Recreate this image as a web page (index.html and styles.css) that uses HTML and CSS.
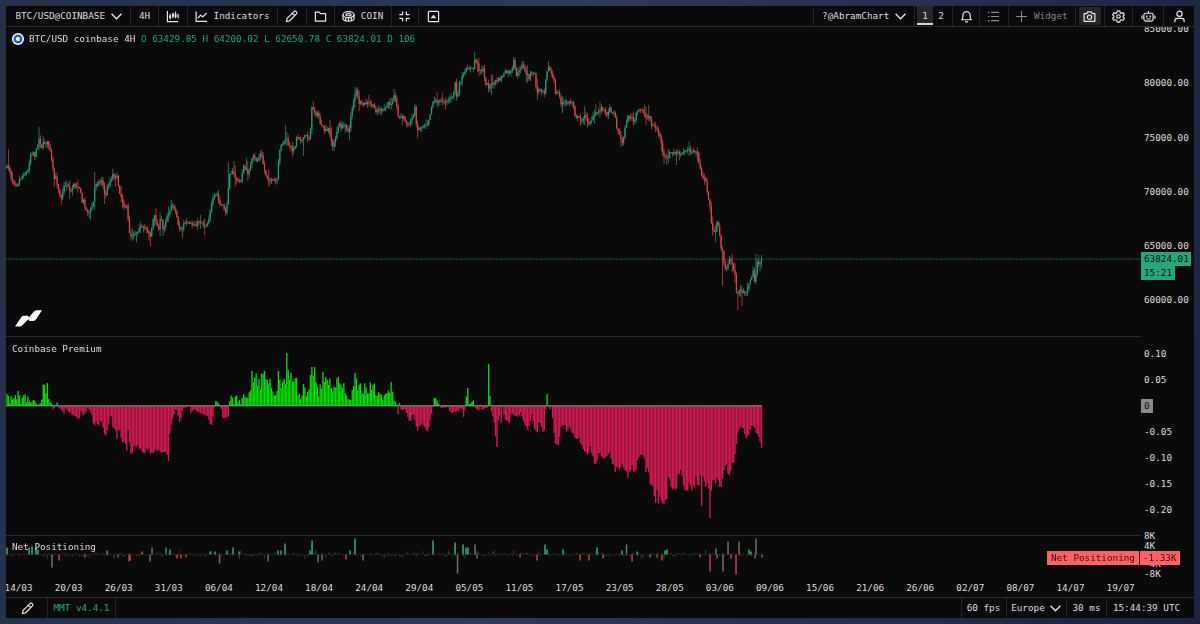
FILE: index.html
```
<!DOCTYPE html>
<html lang="en">
<head>
  <meta charset="UTF-8" />
  <title>BTC/USD coinbase 4H</title>
  <link rel="stylesheet" href="styles.css">
</head>
<body>

<div class="app">
  <header class="toolbar">
    <div class="cell pair">BTC/USD@COINBASE <svg class="chev" viewBox="0 0 10 6"><path d="M.5.5 5 5 9.5.5"/></svg></div>
    <div class="cell tf">4H</div>
    <div class="cell icon28"><svg class="ico" viewBox="0 0 14 14"><path d="M1.500 1v11.500H13"/><path d="M4.500 4v6M7.500 3v6M10.300 2v7M13 4v5"/><path stroke-width="2" d="M4.500 6v3M7.500 4v3M10.300 4.500v3"/></svg></div>
    <div class="cell indicators"><svg class="ico" viewBox="0 0 14 14"><path d="M1.200 1.500v10.800H13M3 9l3-3.500 2.500 2L12.500 3"/></svg> Indicators</div>
    <div class="cell icon28"><svg class="ico" viewBox="0 0 14 14"><path d="M1.500 12.500l.8-3.500L9.500 1.800a1.700 1.700 0 0 1 2.600 2.600L5 11.600zM8 3.500 10.500 6"/></svg></div>
    <div class="cell icon28"><svg class="ico" viewBox="0 0 14 14"><path d="M1.500 2.300h4l1.500 1.700h5.500v8h-11z"/></svg></div>
    <div class="cell coin"><svg class="ico" viewBox="0 0 14 14"><ellipse cx="7" cy="5" rx="6" ry="3.200"/><ellipse cx="7" cy="5" rx="2.800" ry="1.200"/><path d="M1 5v3.500c0 4.600 12 4.600 12 0V5M4 8v3M7 8.500v3.500M10 8v3"/></svg> COIN</div>
    <div class="cell shrink"><svg class="ico" viewBox="0 0 14 14"><path d="M5 1.500V5H1.500M9 1.500V5h3.500M5 12.500V9H1.500M9 12.500V9h3.500"/></svg></div>
    <div class="cell last"><svg class="ico" viewBox="0 0 14 14"><rect x="1.500" y="1.500" width="11" height="11" rx="1"/><path class="solid" d="M3.800 8.800 7 5l3.200 3.800z"/></svg></div>
    <div class="grow"></div>
    <div class="cell layout">?@AbramChart <svg class="chev" viewBox="0 0 10 6"><path d="M.5.5 5 5 9.5.5"/></svg></div>
    <div class="cell tabs"><span class="tab active">1</span><span class="tab">2</span></div>
    <div class="cell bell"><svg class="ico" viewBox="0 0 14 14"><path d="M1.800 10.500c1.400-1.200 1.400-2.500 1.400-5a3.800 3.800 0 0 1 7.600 0c0 2.500 0 3.800 1.400 5zM5.500 12.700h3"/></svg></div>
    <div class="cell list"><svg class="ico dim" viewBox="0 0 14 14"><path d="M4.500 2.500H13M4.500 7H13M4.500 11.500H13M1 2.500h1.600M1 7h1.600M1 11.500h1.600"/></svg></div>
    <div class="cell widget"><svg class="ico dim" viewBox="0 0 14 14"><path d="M7 1.200v11.600M1.200 7h11.600"/></svg> Widget</div>
    <div class="cell camera"><span class="shot"><svg class="ico" viewBox="0 0 14 14"><path d="M1.200 4h2.600l1.400-2h3.600l1.400 2h2.600v8.200H1.200z"/><circle cx="7" cy="7.700" r="2.300"/></svg></span></div>
    <div class="cell icon28"><svg class="ico" viewBox="0 0 14 14"><path d="M5.700 1h2.600l.5 1.800 1.500.8 1.800-.5 1.200 2.200L12 6.500v1l1.300 1.300-1.200 2.200-1.900-.5-1.400.8-.5 1.700H5.700l-.5-1.700-1.400-.8-1.900.5L.7 8.800 2 7.500v-1L.7 5.300l1.200-2.200 1.800.5 1.500-.8z"/><circle cx="7" cy="7" r="1.900"/></svg></div>
    <div class="cell robot"><svg class="ico wide" viewBox="0 0 16 14"><path d="M8 1v2.500M5 3.500h6q2 0 2 2V10q0 2-2 2H5q-2 0-2-2V5.500q0-2 2-2zM1 6v3.500M15 6v3.500M5.800 9.700h4.400"/><path stroke-width="1.800" d="M5.300 6.800h1.600M9.100 6.800h1.600"/></svg></div>
    <div class="cell last user"><svg class="ico" viewBox="0 0 14 14"><circle cx="7" cy="4" r="2.800"/><path d="M2 13.300V11.500q0-2.500 2.500-2.500h5q2.500 0 2.500 2.500v1.800"/></svg></div>
  </header>

  <section class="pane price">
    <canvas id="price" width="1135" height="310"></canvas>
    <div class="legend">
      <svg class="coinbase" viewBox="0 0 12 12"><circle cx="6" cy="6" r="6" fill="#fff"/><circle cx="6" cy="6" r="3.300" fill="none" stroke="#2459e0" stroke-width="2.400"/><path d="M6 5.100h3v1.800H6z" fill="#2459e0"/><circle cx="6" cy="6" r="1.700" fill="#fff"/></svg>
      <span>BTC/USD coinbase 4H <em>O 63429.85 H 64200.02 L 62650.78 C 63824.01 D 106</em></span>
    </div>
    <svg class="logo" viewBox="0 0 27 17"><path d="M0 16.500 6 7.500q1-1.700 2.500-1.700h4.500l.8 1.800L18.500 2Q20 .3 21.500.3h5.500L21.300 9q-1.300 2-3 2h-4l-.9-1.800L8 14.800q-1.600 1.700-3 1.700z" fill="#fff"/></svg>
    <div class="axis">
      <span>85000.00</span><span>80000.00</span><span>75000.00</span><span>70000.00</span><span>65000.00</span><span>60000.00</span>
    </div>
    <div class="last-price"><b>63824.01</b><b>15:21</b></div>
  </section>

  <section class="pane premium">
    <canvas id="premium" width="1135" height="198"></canvas>
    <div class="name">Coinbase Premium</div>
    <div class="axis">
      <span>0.10</span><span>0.05</span><span><i>0</i></span><span>-0.05</span><span>-0.10</span><span>-0.15</span><span>-0.20</span>
    </div>
  </section>

  <section class="pane net">
    <canvas id="net" width="1135" height="43"></canvas>
    <div class="name">Net Positioning</div>
    <div class="axis">
      <span>8K</span><span>4K</span><span></span><span>-4K</span><span>-8K</span>
    </div>
    <div class="net-tag"><b>Net Positioning</b><b>-1.33K</b></div>
  </section>

  <div class="dates">
    <span>14/03</span><span>20/03</span><span>26/03</span><span>31/03</span><span>06/04</span><span>12/04</span><span>18/04</span><span>24/04</span><span>29/04</span><span>05/05</span><span>11/05</span><span>17/05</span><span>23/05</span><span>28/05</span><span>03/06</span><span>09/06</span><span>15/06</span><span>21/06</span><span>26/06</span><span>02/07</span><span>08/07</span><span>14/07</span><span>19/07</span>
  </div>

  <footer class="status">
    <div class="cell draw"><svg class="ico" viewBox="0 0 14 14"><path d="M1.500 12.500l.8-3.500L9.500 1.800a1.700 1.700 0 0 1 2.600 2.600L5 11.600zM8 3.500 10.500 6"/></svg></div>
    <div class="cell version">MMT v4.4.1</div>
    <div class="grow"></div>
    <div class="cell fps">60 fps</div>
    <div class="cell region">Europe <svg class="chev" viewBox="0 0 10 6"><path d="M.5.5 5 5 9.5.5"/></svg></div>
    <div class="cell ping">30 ms</div>
    <div class="cell last clock">15:44:39 UTC</div>
  </footer>
</div>

<script src="chart.js"></script>
</body>
</html>
```
FILE: styles.css
```
* { box-sizing: border-box; }
body { margin: 0; height: 624px; padding: 6px; overflow: hidden; background: linear-gradient(100deg, #243149 0%, #2d3a58 45%, #222a45 85%, #1d2340 100%); font-family: "DejaVu Sans Mono", monospace; font-size: 9.3px; line-height: 12px; color: #dcdcdc; }
.app { width: 1188px; height: 612px; background: #0a0a0a; display: flex; flex-direction: column; overflow: hidden; }

/* bars */
.toolbar { display: flex; height: 21px; border-bottom: 1px solid #2b2b2b; flex: none; }
.status { display: flex; height: 21px; border-top: 1px solid #2b2b2b; flex: none; }
.cell { display: flex; align-items: center; justify-content: center; border-right: 1px solid #242424; white-space: pre; flex: none; }
.cell.last { border-right: none; }
.grow { flex: 1; }
.pair { width: 125px; padding-left: 1px; }
.tf { width: 28px; }
.icon28 { width: 28.5px; }
.indicators { width: 90.5px; }
.coin { width: 56.5px; }
.shrink { width: 27.5px; }
.toolbar .last { width: 28px; }
.layout { width: 102px; border-left: 1px solid #242424; }
.tabs { width: 38px; justify-content: flex-start; align-items: flex-start; padding-left: 2px; }
.tab { width: 16px; height: 19px; line-height: 20px; text-align: center; }
.tab.active { background: #262626; border-bottom: 2px solid #d8d8d8; }
.bell { width: 27px; }
.list { width: 28.5px; }
.widget { width: 67px; color: #858585; }
.camera { width: 29px; }
.shot { width: 22px; height: 18px; background: #262626; display: flex; align-items: center; justify-content: center; }
.robot { width: 31px; }
.toolbar .user { width: 30px; }
.draw { width: 42px; padding-left: 2px; }
.version { width: 68px; color: #26a17b; }
.fps { width: 46px; border-left: 1px solid #242424; }
.region { width: 60.5px; }
.ping { width: 40px; }
.clock { width: 87px; padding-right: 8px; }

.ico { width: 13px; height: 13px; fill: none; stroke: #e8e8e8; stroke-width: 1.3; stroke-linejoin: round; flex: none; }
.ico.wide { width: 15px; height: 13px; }
.ico.dim { stroke: #8d8d8d; stroke-width: 1.2; }
.ico .solid { fill: #e8e8e8; stroke: none; }
.chev { width: 11px; height: 7px; fill: none; stroke: #e8e8e8; stroke-width: 1.2; }

/* panes */
.pane { position: relative; display: flex; flex: none; }
.pane canvas { display: block; flex: none; }
.price { height: 310px; overflow: hidden; }
.premium { height: 198px; }
.net { height: 43px; }
.axis { display: flex; flex-direction: column; padding-left: 3px; width: 53px; }
.axis span { display: flex; align-items: center; flex: none; }
.price .axis { margin-top: -25.2px; }
.price .axis span { height: 54.3px; }
.premium .axis { margin-top: 4.500px; }
.premium .axis span { height: 25.9px; }
.net .axis { margin-top: -3.500px; }
.net .axis span { height: 9.4px; }
.axis i { font-style: normal; background: #8a8a8a; color: #111; padding: 1px 3px; margin-left: -3px; }
.legend { position: absolute; left: 6px; top: 6px; display: flex; align-items: center; gap: 5px; white-space: pre; }
.legend em { font-style: normal; color: #26a17b; }
.coinbase { width: 12px; height: 12px; }
.logo { position: absolute; left: 9px; top: 283px; width: 27px; height: 17px; }
.name { position: absolute; left: 6px; top: 6px; }
.last-price { position: absolute; left: 1135px; top: 225px; display: flex; flex-direction: column; align-items: flex-start; }
.last-price b { font-weight: normal; background: #26a67d; color: #06110d; padding: 0 2.500px 0 3px; height: 14px; line-height: 14px; }
.last-price b + b { line-height: 13px; }
.net-tag { position: absolute; left: 1041px; top: 16px; display: flex; gap: 1px; }
.net-tag b { font-weight: normal; background: #ff6262; color: #3b0d0d; padding: 0 4px; height: 14px; line-height: 14px; }
.net-tag b + b { padding: 0 3px; }
.dates { display: flex; height: 19px; margin-left: -12.5px; padding-top: 4px; flex: none; }
.dates span { width: 50.1px; text-align: center; flex: none; }
```
FILE: chart.js
```
// all points are [x, y] in app pixels, one bar = 4h
const STEP = 1.392;
const GREEN = "#26ad82";
const RED = "#ee4e55";

const closes = [7,168,9,166,11,177,14,182,17,184,20,179,24,173,28,172,30,155,33,151,35,156,38,143,39,139,42,147,44,142,48,143,50,150,52,163,54,179,56,178,58,187,61,198,63,189,66,184,68,184,70,193,73,185,79,185,82,202,84,201,86,210,90,213,94,200,95,183,100,182,102,179,105,198,108,185,113,174,117,178,120,193,124,205,127,208,129,230,131,236,134,233,137,232,139,226,143,229,147,228,150.5,236,153,220,155,216,158,230,161,218,163,230,167,215,170,210,173,204,176,213,179,228,182,230,184,223,190,225,197,224,200,220.5,205,226,208,222,211,206,213,200,217,193,219,203,223,207,226,212,227.5,203,229,172,233,173,238,182,241,180,243,167,248,173,253,157,257,161,261,153,265,173,270,181,277,182,279,157,281,143,283,143,286,138,289,147,294,150,297,135,303,141,305,135,309,139,310,133,312,107,315,112,319,117,321,127,327,132,329,128,333,149,335,138,339,125,343,128,345,122,349,135,351,113,354,98,356,90,359,103,362,105,367,103,372,105,375,110,380,110,383,112,387,105,392,102,394,93,397,108,399,118,403,116,408,127,412,118,415,108,417,130,421,127,428,122,433,100,438,102,447,100,453,98,455,80,457,100,460,82,465,73,468,67,473,70,475,58,479,69,483,70,485,82,489,87,493,83,500,79,505,73,512,72,514,60,516,75,519,73,522,63,525,72,529,77,534,71,537,93,540,88,545,92,546,72,548,67,551,73,554,82,555,92,559,94,561,103,567,103,573,102,575,115,578,118,581,120,584,116,589,122,593,118,598,111,603,107,606,115,609,109,614,112,617,128,622,143,625,130,627,118,631,116,634,123,637,112,642,109,647,119,649,113,651,125,657,129,661,140,663,157,667,158,670,153,677,153,681,155,688,148,695,153,697,152,700,167,702,180,705,177,707,190,710,207,711,222,715,237,717,223,719,227,721,247,723,255,726,272,729,260,732,263,735,275,737,297,740,290,745,292,748,290,750,280,753,272,755,285,757,260,760,265,762,258];

// long wicks
const wicks = [9,149,39,127,61,205,70,199,90,220,95,172,113,170,105,204,150.5,246,163,236,171,200,182,238,229,162,234,161,246,158,286,125,303,156,313,101,333,151,356,88,394,89,417,138,475,52,514,57,523,61,537,97,548,61,581,126,622,146,649,105,667,165,676,165,715,242,723,286,738,310,742,306,756,254,762,255,760,271];

const premium = [7,13,9,13,10,1,11,10,13,5,15,15,16,5,18,13,20,15,21,2,23,10,25,13,26,2,28,11,30,3,33,7,36,4,38,1,41,3,43,18,45,21,46,14,47.5,23,49,8,52,2,53,-4,55,-1,57.5,6,58,-1,62,-4,64,-8,65,-2,70,-7,75,-10,79,-14,81,-4,84,-10,88,-1,92,-10,94,-22,97,-14,98,-22,101,-13,105.5,-32,108,-23,111,-4,112,-20,115,-24,117,-33,119,-20,123,-40,125,-35,127,-46,128,-24,131,-50,133,-42,138,-41,144,-49,148,-42,152,-49,156,-42,160,-47,165,-46,169,-55,170,-23,173,-12,176,-1,180,-17,183,-2,188,-1,189,5,190,-8,194,-3,200,-7,208,-10,211,-22,214,-5,215,4,218,8,219,-1,221,-1,223,-13,229,-10,230,10,232,11,234,1,236,12,238,4,239,8,241,3,243,12,246,9,250,16,252,35,254,25,256,33,259,24,262,30,265,30,268,20,271,27,273,11,277,15,279,35,281,24,283,30,285,24,287,53,289,32,292,28,294,21,296,31,298,10,301,10,304,24,306,9,309,17,312,39,314,39,315,25,316,21,318,15,321,20,323,31,326,26,329,26,333,20,336,22,339,27,341,18,345,22,347,6,350,7,354,20,355,33,357,22,361,23,363,13,365,21,368,12,370,21,373,21,376,18,379,14,381,16,383,5,386,17,388,15,391,24,393,12,396,4,397,1,398,-11,399,6,401,-4,405,-3,410,-17,413,-6,417,-25,422,-17,428,-27,431,-10,433,-1,434,10,437,6,439,2,441,-2,449,-1,450,-7,458,-5,462,-1,463,-14,465,-4,466,7,467.5,18,469,2,473,6,475,-2,479,-5,480,4,481,-4,488,-1,489.3,42,490.5,-2,494,-15,496.5,-41,499,-5,501,-19,502.5,-1,505,-14,510,-17,511,-7,519,-12,520,-4,525,-20,528,-24,532,-8,534,-22,537,-28,539,-14,544,-30,546,1,547,12,549,-6,551,1,552,-6,555,-37,557,-38,559,-43,560,-23,565,-18,567,-28,569,-19,575,-32,579,-33,583,-42,588,-50,590,-41,595,-60,599,-48,605,-55,609,-46,615,-64,620,-62,622,-56,628,-74,630,-62,635,-65,639,-52,644,-49,646,-67,648,-57,651,-90,652,-72,655,-97,657,-88,659,-100,661,-91,663,-100,665,-92,667,-98,668,-71,673,-83,677,-79,678,-66,681,-68,684,-83,690,-81,694,-84,696,-71,699,-82,700,-65,701,-100,703,-70,706,-83,709,-80,710,-112,712,-79,717,-76,721,-84,723,-67,726,-57,729,-71,732,-61,735,-50,737,-31,740,-20,744,-24,746,-33,749,-27,752,-18,755,-24,758,-30,761,-41];
const premiumPeaks = [287,53,489,42,467.5,18,547,12,496.5,-41,701,-100,710,-112,169,-55,312,39,314,39,355,33,252,35,279,35,45,21,47.5,23,391,24];

const netBars = {
  "#42a877": [7,7,29,7,32,8,36,7,38,5,107,4,170,5,210,3,215,3,227,4,233,7,239,3,278,4,281,4,285,11,310,4,312,14,350,4,355,16,433,14,455,12,463,10,466,7,468,7,545,10,547,5,563,5,597,7,622,4,637,3,665,4,667,5,749,5,751,3],
  "#707070": [52,-13,142,3,150,-7,152,7,166,7,219.5,-9,268,-7,318,-8,322,-6,363,-6,457.5,-19,475,10,477,-4,603,-4,626.5,10,716,6,723,-17,728,13,739,13,756,16,755,-4,762,-3],
  "#b84a4d": [59,-6,85,-3,118,-3,129,-7,130,-6,177,-4,181,-4,186,-3,346,-5,520,-3,537,-6,580,-6,589,-6,632,-7,650,-3,657,-3,662,-6,700,-3,710,-17,717,-4,731,-4,736,-20]
};

let seed = 7;
function rnd() {
  seed = (seed * 16807) % 2147483647;
  return seed / 2147483647;
}

function at(arr, x) {
  for (let i = 2; i < arr.length; i += 2) {
    if (x <= arr[i]) {
      const t = (x - arr[i - 2]) / (arr[i] - arr[i - 2]);
      return arr[i - 1] + t * (arr[i + 1] - arr[i - 1]);
    }
  }
  return arr[arr.length - 1];
}

function peak(arr, x) {
  for (let i = 0; i < arr.length; i += 2) {
    if (Math.abs(arr[i] - x) <= STEP / 2) return arr[i + 1];
  }
  return null;
}

function ctxFor(id, top) {
  const ctx = document.getElementById(id).getContext("2d");
  ctx.translate(-6, -top);
  return ctx;
}

function drawPrice() {
  const c = ctxFor("price", 27);
  c.fillStyle = "#2e7560";
  for (let x = 6; x < 1141; x += 2.5) c.fillRect(x, 258.6, 1.3, 1);
  let open = 168;
  for (let x = 7; x < 762.5; x += STEP) {
    const close = at(closes, x) + (rnd() - 0.5) * 4.5;
    const reach = rnd() < 0.2 ? 9 : 4;
    let hi = Math.min(open, close) - rnd() * reach;
    let lo = Math.max(open, close) + rnd() * reach;
    const w = peak(wicks, x);
    if (w !== null) { hi = Math.min(hi, w); lo = Math.max(lo, w); }
    c.fillStyle = close <= open ? GREEN : RED;
    c.globalAlpha = 0.7;
    c.fillRect(x - 0.45, hi, 0.9, lo - hi);
    c.globalAlpha = 0.8;
    c.fillRect(x - 0.65, Math.min(open, close), 1.3, Math.max(1, Math.abs(close - open)));
    open = close;
  }
  c.globalAlpha = 1;
  c.fillStyle = "#2b2b2b";
  c.fillRect(6, 336, 1135, 1);
}

function drawPremium() {
  const c = ctxFor("premium", 337);
  for (let x = 7; x < 761.8; x += STEP) {
    let v = at(premium, x);
    v *= v > 0 ? 0.6 + rnd() * 0.6 : 0.94 + rnd() * 0.1;
    const p = peak(premiumPeaks, x);
    if (p !== null) v = p;
    if (v > 0) {
      c.fillStyle = "#00dc00";
      c.fillRect(x - 0.67, 406 - v, 1.34, v);
    } else {
      c.fillStyle = "#cc1c50";
      c.fillRect(x - 0.68, 406, 1.37, -v);
    }
  }
  c.fillStyle = "#a58a8e";
  c.fillRect(6, 405.3, 756, 1);
}

function drawNet() {
  const c = ctxFor("net", 535);
  c.fillStyle = "#2b2b2b";
  c.fillRect(6, 535, 1135, 1);
  for (let x = 7; x < 762; x += STEP) {
    const r = rnd();
    c.fillStyle = r < 0.25 ? "#275440" : r < 0.5 ? "#632f31" : "#343434";
    const v = (rnd() - 0.5) * (rnd() < 0.15 ? 9 : 4);
    c.fillRect(x - 0.5, Math.min(554.5, 554.5 - v), 1, Math.max(0.5, Math.abs(v)));
  }
  for (const color in netBars) {
    c.fillStyle = color;
    const a = netBars[color];
    for (let i = 0; i < a.length; i += 2) {
      c.fillRect(a[i] - 0.7, Math.min(554.5, 554.5 - a[i + 1]), 1.5, Math.abs(a[i + 1]));
    }
  }
}

drawPrice();
drawPremium();
drawNet();
```
